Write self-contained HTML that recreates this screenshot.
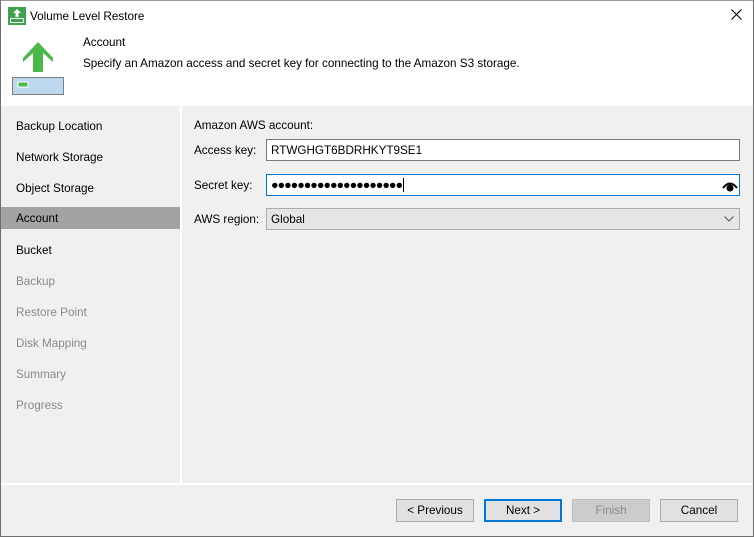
<!DOCTYPE html>
<html><head><style>
*{margin:0;padding:0;box-sizing:border-box}
body{width:754px;height:537px;overflow:hidden;font-family:"Liberation Sans",sans-serif;font-size:11.7px;color:#000;background:#f0f0f0;position:relative}
.win{position:absolute;left:0;top:0;width:754px;height:537px;border:1px solid #6e6e6e;border-top-color:#9a9a9a}
.abs{position:absolute}
.nav div{position:absolute;left:1px;width:179px;height:22px;line-height:23px;padding-left:15px}
.g{color:#8a8a8a}
.lbl{position:absolute;left:194px}
.box{position:absolute;left:266px;width:474px;height:22px;border:1px solid #7a7a7a;background:#fff;padding-left:4px;line-height:21px}
.btn{position:absolute;top:499px;height:23px;width:78px;border:1px solid #adadad;background:#e1e1e1;text-align:center;line-height:22px}
</style></head><body>
<div class="abs" style="left:0;top:0;width:754px;height:106px;background:#fff"></div>
<svg class="abs" style="left:8px;top:7px" width="18" height="18"><rect x="0" y="0" width="18" height="18" fill="#3fa34d"/><rect x="2" y="11" width="14" height="5" fill="#fff"/><rect x="3" y="12" width="12" height="3" fill="#3fa34d"/><path d="M9 2 L13 6 L10.5 6 L10.5 10 L7.5 10 L7.5 6 L5 6Z" fill="#fff"/></svg>
<div class="abs" style="left:30px;top:10px">Volume Level Restore</div>
<svg class="abs" style="left:731px;top:9px" width="11" height="11"><path d="M0.5 0.5 L10.5 10.5 M10.5 0.5 L0.5 10.5" stroke="#000" stroke-width="1.1"/></svg>
<svg class="abs" style="left:12px;top:42px" width="54" height="54"><path d="M26 0 L41 16 L41 20 L31 11 L31 30 L21 30 L21 11 L11 20 L11 16Z" fill="#4db848"/><rect x="0.5" y="35.5" width="51" height="17" fill="#bdd7ee" stroke="#7f7f7f"/><rect x="6" y="40" width="10" height="5" fill="#4db848" stroke="#fff"/></svg>
<div class="abs" style="left:83px;top:36px">Account</div>
<div class="abs" style="left:83px;top:57px">Specify an Amazon access and secret key for connecting to the Amazon S3 storage.</div>
<div class="abs" style="left:180px;top:106px;width:2px;height:378px;background:#fff"></div>
<div class="abs" style="left:0;top:483px;width:754px;height:2px;background:#fff"></div>
<div class="nav">
<div style="top:115px">Backup Location</div>
<div style="top:146px">Network Storage</div>
<div style="top:177px">Object Storage</div>
<div style="top:207px;background:#a3a3a3">Account</div>
<div style="top:239px">Bucket</div>
<div class="g" style="top:270px">Backup</div>
<div class="g" style="top:301px">Restore Point</div>
<div class="g" style="top:332px">Disk Mapping</div>
<div class="g" style="top:363px">Summary</div>
<div class="g" style="top:394px">Progress</div>
</div>
<div class="lbl" style="top:119px">Amazon AWS account:</div>
<div class="lbl" style="top:144px">Access key:</div>
<div class="box" style="top:139px">RTWGHGT6BDRHKYT9SE1</div>
<div class="lbl" style="top:179px">Secret key:</div>
<div class="box" style="top:174px;border-color:#0078d7;font-size:12.5px;letter-spacing:-1px">●●●●●●●●●●●●●●●●●●●●<span style="border-left:1px solid #000;margin-left:1px"></span></div>
<svg class="abs" style="left:722px;top:180px" width="16" height="12"><path d="M1 8 Q8 -1 15 8" fill="none" stroke="#000" stroke-width="2"/><circle cx="8" cy="8" r="3.5" fill="#000"/></svg>
<div class="lbl" style="top:213px">AWS region:</div>
<div class="box" style="top:208px;background:#e5e5e5;border-color:#adadad">Global</div>
<svg class="abs" style="left:724px;top:216px" width="10" height="6"><path d="M0.5 0.5 L5 5 L9.5 0.5" fill="none" stroke="#555"/></svg>
<div class="btn" style="left:396px">&lt; Previous</div>
<div class="btn" style="left:484px;border:2px solid #0078d7;line-height:20px">Next &gt;</div>
<div class="btn" style="left:572px;background:#ccc;border-color:#bfbfbf;color:#8a8a8a">Finish</div>
<div class="btn" style="left:660px">Cancel</div>
<div class="win"></div>
</body></html>
